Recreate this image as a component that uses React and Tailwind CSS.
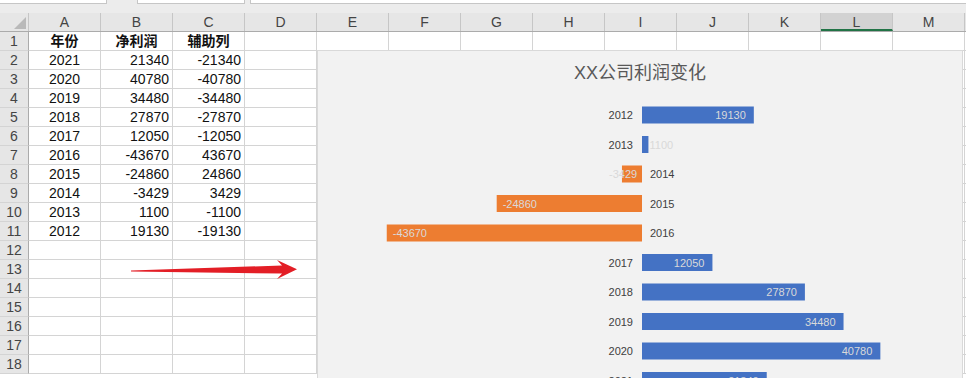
import React from 'react';

const COLS = ['A', 'B', 'C', 'D', 'E', 'F', 'G', 'H', 'I', 'J', 'K', 'L', 'M'];
const DATA = [
  ['年份', '净利润', '辅助列'],
  ['2021', '21340', '-21340'],
  ['2020', '40780', '-40780'],
  ['2019', '34480', '-34480'],
  ['2018', '27870', '-27870'],
  ['2017', '12050', '-12050'],
  ['2016', '-43670', '43670'],
  ['2015', '-24860', '24860'],
  ['2014', '-3429', '3429'],
  ['2013', '1100', '-1100'],
  ['2012', '19130', '-19130'],
];

const BARS = [
  ['2012', 19130],
  ['2013', 1100],
  ['2014', -3429],
  ['2015', -24860],
  ['2016', -43670],
  ['2017', 12050],
  ['2018', 27870],
  ['2019', 34480],
  ['2020', 40780],
  ['2021', 21340],
];

const FONT = "'Liberation Sans','Noto Sans CJK SC',sans-serif";

function HeaderRow() {
  return (
    <div className="flex h-[19px] bg-[#e6e6e6] border-b border-[#ababab]">
      <div className="relative w-[29px] shrink-0 border-r border-[#c6c6c6]">
        <svg className="absolute left-[14px] top-[4px]" width="12" height="12" viewBox="0 0 12 12">
          <polygon points="12,0 12,12 0,12" fill="#b9b9b9" />
        </svg>
      </div>
      {COLS.map((c) => (
        <div
          key={c}
          className={
            c === 'L'
              ? 'w-[72px] shrink-0 border-r border-[#c6c6c6] bg-[#d2d2d2] border-b-2 border-b-[#217346] text-center text-[14px] leading-[18px] text-[#444]'
              : 'w-[72px] shrink-0 border-r border-[#c6c6c6] text-center text-[14px] leading-[18px] text-[#444]'
          }
        >
          {c}
        </div>
      ))}
      <div className="flex-1" />
    </div>
  );
}

function Row({ n }) {
  const d = DATA[n - 1];
  return (
    <div className="flex h-[19px]">
      <div className="w-[29px] shrink-0 bg-[#e6e6e6] border-r border-[#ababab] border-b border-b-[#d4d4d4] text-center text-[14px] leading-[18px] text-[#444]">
        {n}
      </div>
      {COLS.map((c, i) => {
        let content = null;
        let align = 'text-right pr-[3px]';
        let weight = '';
        if (d && i < 3) {
          content = d[i];
          if (i === 0) align = 'text-center';
          if (n === 1) {
            align = 'text-center';
            weight = 'font-bold';
          }
        }
        return (
          <div
            key={c}
            className={`w-[72px] shrink-0 border-r border-b border-[#d4d4d4] text-[14px] leading-[18px] text-[#111] ${align} ${weight}`}
          >
            {content}
          </div>
        );
      })}
      <div className="flex-1 border-b border-[#d4d4d4]" />
    </div>
  );
}

function Chart() {
  const axis = 642;
  const s = 0.005845;
  return (
    <div className="absolute left-[317px] top-[50px] w-[646px] h-[340px] bg-[#f2f2f2] border border-[#d9d9d9]">
      <div
        className="pt-[10px] text-center text-[18px] leading-[24px] text-[#595959]"
        style={{ fontFamily: FONT }}
      >
        XX公司利润变化
      </div>
      <svg className="absolute left-0 top-0" width="646" height="340">
        <g transform="translate(-318,-51)" fontFamily="'Liberation Sans',sans-serif" fontSize="11">
          {BARS.map(([y, v], i) => {
            const c = 115 + 29.5 * i;
            const w = Math.abs(v) * s;
            const pos = v > 0;
            const x = pos ? axis : axis - w;
            let lx;
            let anchor;
            if (y === '2013') {
              lx = 649.5;
              anchor = 'start';
            } else if (y === '2014') {
              lx = 609;
              anchor = 'start';
            } else if (pos) {
              lx = axis + w - 8;
              anchor = 'end';
            } else {
              lx = axis - w + 6;
              anchor = 'start';
            }
            return (
              <g key={y}>
                <rect x={x} y={c - 8.5} width={w} height={17} fill={pos ? '#4472c4' : '#ed7d31'} />
                <text x={lx} y={c + 4} textAnchor={anchor} fill="#d9d9d9">
                  {v}
                </text>
                <text
                  x={pos ? 633 : 650}
                  y={c + 4}
                  textAnchor={pos ? 'end' : 'start'}
                  fill="#404040"
                >
                  {y}
                </text>
              </g>
            );
          })}
        </g>
      </svg>
    </div>
  );
}

export default function App() {
  return (
    <div
      className="relative h-[378px] w-[966px] overflow-hidden bg-white"
      style={{ fontFamily: FONT }}
    >
      <div className="flex h-[13px] bg-[#ececec]">
        <div className="h-[4px] w-[107px] bg-white border-b border-r border-[#c6c6c6]" />
        <div className="w-[30px]" />
        <div className="h-[4px] w-[108px] bg-white border-b border-l border-r border-[#c6c6c6]" />
        <div className="w-[5px]" />
        <div className="h-[4px] flex-1 bg-white border-b border-l border-[#c6c6c6]" />
      </div>
      <HeaderRow />
      {Array.from({ length: 18 }, (_, i) => (
        <Row key={i} n={i + 1} />
      ))}
      <Chart />
      <svg className="pointer-events-none absolute left-0 top-0" width="966" height="378">
        <polygon
          points="131,270.5 282,265.5 277,260 297,269.3 277,279 282,273.5 131,271.5"
          fill="#e31e26"
        />
      </svg>
    </div>
  );
}
